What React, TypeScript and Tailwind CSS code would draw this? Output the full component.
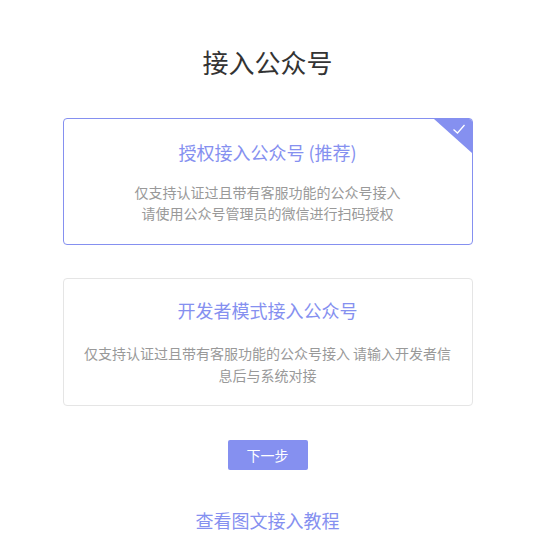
export default function App() {
  return (
    <div className="w-[535px] flex flex-col items-center bg-white pt-[45px] pb-8 font-['Noto_Sans_CJK_SC',sans-serif]">
      <h1 className="text-[26px] leading-[34px] text-[#333]">接入公众号</h1>

      {/* 推荐方式 */}
      <div className="relative mt-[39px] w-[410px] h-[127px] rounded-[4px] border border-[#8590f0] overflow-hidden flex flex-col items-center pt-[20px]">
        <div className="absolute right-0 top-0 w-0 h-0 border-t-[34px] border-l-[38px] border-t-[#8590f0] border-l-transparent" />
        <svg className="absolute right-[6px] top-[4px] w-[14px] h-[12px]" viewBox="0 0 14 12" fill="none" stroke="#fff" strokeWidth="1.3">
          <path d="M1.5 6.5l4 3.5 7-8" />
        </svg>
        <div className="text-[18px] leading-[26px] text-[#8590f0]">授权接入公众号 (推荐)</div>
        <div className="mt-[17px] text-[14px] leading-[21px] text-[#999] text-center">
          仅支持认证过且带有客服功能的公众号接入
          <br />
          请使用公众号管理员的微信进行扫码授权
        </div>
      </div>

      {/* 开发者模式 */}
      <div className="mt-[33px] w-[410px] h-[128px] rounded-[4px] border border-[#e5e5e5] flex flex-col items-center pt-[18px] px-[18px]">
        <div className="text-[18px] leading-[26px] text-[#8590f0]">开发者模式接入公众号</div>
        <div className="mt-[19px] text-[14px] leading-[22px] text-[#999] text-center">
          仅支持认证过且带有客服功能的公众号接入 请输入开发者信息后与系统对接
        </div>
      </div>

      <button className="mt-[34px] w-[80px] h-[30px] rounded-[2px] bg-[#8590f0] text-white text-[14px]">
        下一步
      </button>

      <a className="mt-[37px] text-[18px] leading-[26px] text-[#8590f0] cursor-pointer">查看图文接入教程</a>
    </div>
  );
}
